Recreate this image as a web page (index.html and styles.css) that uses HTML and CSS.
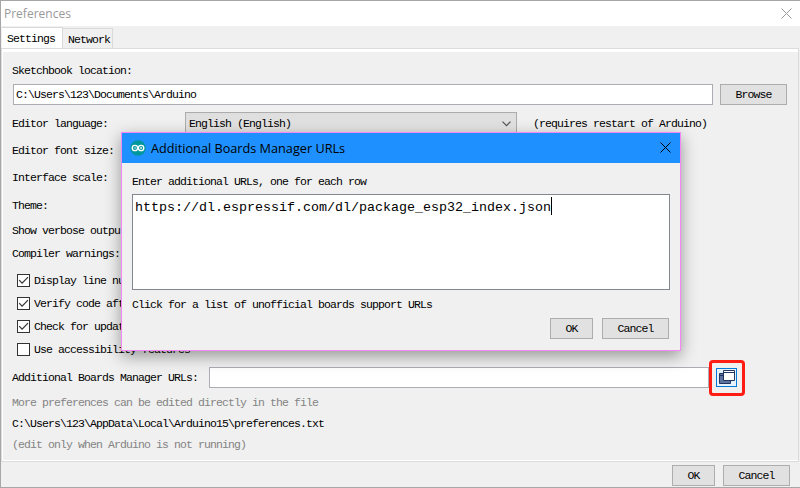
FILE: index.html
```html
<!DOCTYPE html>
<html lang="en">
<head>
<meta charset="utf-8">
<title>Preferences</title>
<link rel="stylesheet" href="styles.css">
</head>
<body>
<main class="window">
  <header class="titlebar"><span>Preferences</span>
    <svg class="close" width="11" height="11" viewBox="0 0 11 11"><path d="M.5.5l10 10M10.5.5l-10 10"/></svg>
  </header>
  <nav class="tabs">
    <div class="tab active"><span class="t">Settings</span></div>
    <div class="tab"><span class="t">Network</span></div>
  </nav>
  <section class="pane">
    <div class="row r-head"><span class="t">Sketchbook location:</span></div>
    <div class="row r-path">
      <div class="field path"><span class="t">C:\Users\123\Documents\Arduino</span></div>
      <button class="btn wide"><span class="t">Browse</span></button>
    </div>
    <div class="row r-lang"><span class="t lang-label">Editor language:</span>
      <div class="select"><span class="t">English (English)</span>
        <svg width="9" height="6" viewBox="0 0 9 6"><path d="M.5.7l4 4 4-4"/></svg>
      </div>
      <span class="t">(requires restart of Arduino)</span>
    </div>
    <div class="row r27"><span class="t">Editor font size:</span></div>
    <div class="row r27"><span class="t">Interface scale:</span></div>
    <div class="row r28"><span class="t">Theme:</span></div>
    <div class="row r22"><span class="t">Show verbose outpu</span></div>
    <div class="row r25"><span class="t">Compiler warnings:</span></div>
    <div class="checks">
      <div class="row check"><i class="box"><svg width="11" height="11" viewBox="0 0 11 11"><path d="M1.2 5.2l2.9 3L10 2.2"/></svg></i><span class="t">Display line nu</span></div>
      <div class="row check"><i class="box"><svg width="11" height="11" viewBox="0 0 11 11"><path d="M1.2 5.2l2.9 3L10 2.2"/></svg></i><span class="t">Verify code aft</span></div>
      <div class="row check"><i class="box"><svg width="11" height="11" viewBox="0 0 11 11"><path d="M1.2 5.2l2.9 3L10 2.2"/></svg></i><span class="t">Check for updat</span></div>
      <div class="row check"><i class="box"></i><span class="t">Use accessibility features</span></div>
    </div>
    <div class="row r-urls"><span class="t url-label">Additional Boards Manager URLs:</span>
      <div class="field urls"></div>
      <div class="open">
        <svg width="19" height="17" viewBox="0 0 19 17"><path fill="#5d739d" stroke="#1f355f" d="M2.5 4.5h11v10h-11z"/><path stroke="#1f355f" d="M2 6.5h12"/><path fill="#fff" stroke="#1f355f" d="M6.5 1.5h11v10h-11z"/><path stroke="#1f355f" d="M6 3.5h12"/></svg>
        <div class="highlight"></div>
      </div>
    </div>
    <div class="row r22 muted"><span class="t">More preferences can be edited directly in the file</span></div>
    <div class="row r21"><span class="t">C:\Users\123\AppData\Local\Arduino15\preferences.txt</span></div>
    <div class="row r21 muted"><span class="t">(edit only when Arduino is not running)</span></div>
  </section>
  <footer class="actions">
    <button class="btn"><span class="t">OK</span></button>
    <button class="btn wide"><span class="t">Cancel</span></button>
  </footer>

  <div class="dialog">
    <header class="dialog-title">
      <svg width="16" height="16" viewBox="0 0 16 16"><circle cx="8" cy="8" r="7.8" fill="#00979d"/><g fill="none" stroke="#fff" stroke-width="1.3"><circle cx="4.9" cy="8" r="2.7"/><circle cx="11.1" cy="8" r="2.7"/></g><path d="M3.8 8h2.2M10 8h2.2M11.1 6.9v2.2" stroke="#fff" stroke-width=".8"/></svg>
      <span>Additional Boards Manager URLs</span>
      <svg class="close" width="11" height="11" viewBox="0 0 11 11"><path d="M.5.5l10 10M10.5.5l-10 10"/></svg>
    </header>
    <div class="prompt"><span class="t">Enter additional URLs, one for each row</span></div>
    <div class="editor"><span class="url">https://dl.espressif.com/dl/package_esp32_index.json</span><i class="caret"></i></div>
    <div class="hint"><span class="t">Click for a list of unofficial boards support URLs</span></div>
    <div class="dialog-actions">
      <button class="btn"><span class="t">OK</span></button>
      <button class="btn wide"><span class="t">Cancel</span></button>
    </div>
  </div>
</main>
</body>
</html>
```

FILE: styles.css
```css
* { box-sizing: border-box; }
body { margin: 0; }

.window {
  position: relative;
  width: 800px;
  height: 488px;
  overflow: hidden;
  display: flex;
  flex-direction: column;
  background: #f0f0f0;
  border: 1px solid #a7a7a7;
  border-right: 0;
  font: 11.5px/16px "Liberation Mono", monospace;
  color: #000;
}

/* Condensed form text: each glyph cell is 6px wide */
.t {
  flex: none;
  display: inline-block;
  padding-top: 1px;
  white-space: pre;
  letter-spacing: -.9px;
}

svg { display: block; flex: none; fill: none; }

.titlebar {
  height: 25px;
  flex: none;
  display: flex;
  align-items: center;
  justify-content: space-between;
  padding: 0 8px 0 3px;
  background: #fff;
  color: #999;
  font: 12px/16px "Open Sans", sans-serif;
}
.close { stroke: #999; }

.tabs {
  height: 22px;
  flex: none;
  display: flex;
  align-items: flex-end;
  padding-left: 1px;
}
.tab {
  width: 50px;
  height: 20px;
  padding: 2px 0 0 5px;
  border: 1px solid #d9d9d9;
  border-left: 0;
  border-bottom: 0;
}
.tab.active {
  width: 61px;
  height: 21px;
  background: #fff;
}

.pane {
  width: 798px;
  height: 414px;
  flex: none;
  padding: 5px 0 0 9px;
  border: 1px solid #dcdcdc;
  box-shadow: inset 0 3px #fff, inset 1px 0 #fff, inset 0 -1px #fff;
}
.row { display: flex; align-items: center; padding-left: 1px; }
.r-head { height: 30px; padding-top: 3px; }
.r-path { height: 21px; padding-left: 2px; gap: 7px; }
.r-lang { height: 27px; margin-top: 5px; }
.r27 { height: 27px; }
.r28 { height: 28px; }
.r25 { height: 25px; }
.r22 { height: 22px; }
.r21 { height: 21px; }
.muted { color: #848484; }

.field {
  height: 21px;
  background: #fff;
  border: 1px solid #abadb3;
  padding: 1px 0 0 2px;
}
.path { width: 700px; }
.urls { width: 500px; }

.lang-label { width: 173px; }
.select {
  width: 332px;
  height: 23px;
  margin-right: 16px;
  padding: 0 5px 0 3px;
  display: flex;
  align-items: center;
  justify-content: space-between;
  border: 1px solid #acacac;
  background: linear-gradient(#dedede, #e5e5e5);
}
.select svg { stroke: #555; stroke-width: 1.2; }

.checks { padding: 3px 0 1px 4px; }
.check { height: 23px; gap: 4px; padding-left: 2px; }
.box { width: 13px; height: 13px; border: 1px solid #333; background: #fff; }
.box svg { stroke: #333; stroke-width: 1.2; }

.r-urls { height: 21px; margin: 5px 0 3px; }
.url-label { width: 197px; }
.open {
  position: relative;
  width: 21px;
  height: 19px;
  margin-left: 7px;
  border: 1px solid #0078d7;
  background: #e5f1fb;
}
.highlight {
  position: absolute;
  left: -8px;
  top: -9px;
  width: 36px;
  height: 36px;
  border: 3px solid #ff1c12;
  border-radius: 4px;
}

.btn {
  width: 43px;
  height: 21px;
  flex: none;
  padding: 0;
  display: flex;
  align-items: center;
  justify-content: center;
  border: 1px solid #adadad;
  background: #e1e1e1;
  color: #000;
  font: inherit;
}
.btn.wide { width: 67px; }
.actions, .dialog-actions { display: flex; justify-content: flex-end; }
.actions { padding: 3px 10px 0 0; gap: 8px; }
.dialog-actions { padding-right: 11px; gap: 9px; }

.dialog {
  position: absolute;
  left: 120px;
  top: 131px;
  width: 560px;
  height: 219px;
  border: 1px solid #f586f5;
  background: #f0f0f0;
  box-shadow: 0 5px 15px rgba(0, 0, 0, .38);
}
.dialog-title {
  height: 30px;
  display: flex;
  align-items: center;
  gap: 5px;
  padding: 0 9px 1px 8px;
  background: #1e90ff;
  font: 12.7px/16px "Open Sans", sans-serif;
}
.dialog-title .close { margin-left: auto; stroke: #000; }
.prompt { height: 31px; padding: 10px 0 0 10px; }
.editor {
  width: 538px;
  height: 96px;
  margin-left: 10px;
  padding: 2px;
  display: flex;
  border: 1px solid #828790;
  background: #fff;
  font: 13.333px/19px "Liberation Mono", monospace;
}
.url { padding-top: 1px; }
.caret { width: 1px; height: 18px; background: #000; }
.hint { height: 28px; padding: 6px 0 0 10px; }
```
